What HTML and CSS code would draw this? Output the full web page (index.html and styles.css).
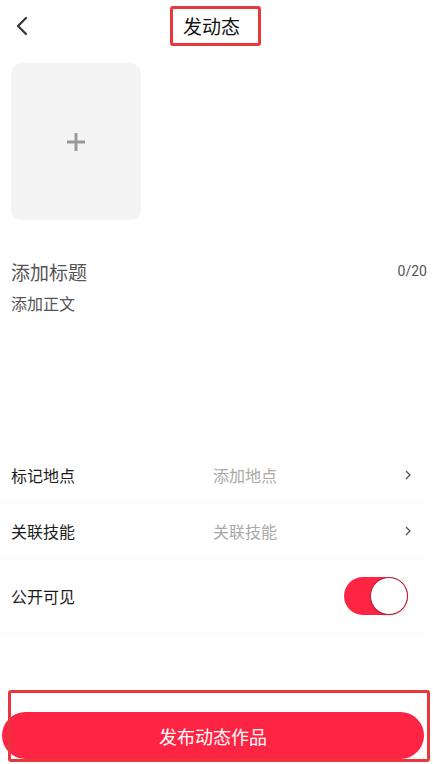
FILE: index.html
```html
<!DOCTYPE html>
<html lang="zh">
<head>
<meta charset="utf-8">
<link rel="stylesheet" href="styles.css">
</head>
<body>
<div class="page">
  <header class="nav">
    <button class="back" aria-label="返回">
      <svg width="14" height="20" viewBox="0 0 14 20"><path d="M11 2 L3 10 L11 18" fill="none" stroke="#333" stroke-width="2.2" stroke-linecap="round" stroke-linejoin="round"/></svg>
    </button>
    <h1 class="title">发动态<span class="mark mark-title"></span></h1>
  </header>

  <div class="photo">
    <svg width="20" height="20" viewBox="0 0 20 20"><path d="M10 1 V19 M1 10 H19" stroke="#9a9a9a" stroke-width="3"/></svg>
  </div>

  <div class="title-row">
    <span class="title-input">添加标题</span>
    <span class="count">0/20</span>
  </div>
  <div class="body-input">添加正文</div>

  <div class="list">
    <div class="row">
      <span class="label">标记地点</span>
      <span class="value">添加地点</span>
      <svg class="chev" width="6" height="10" viewBox="0 0 6 10"><path d="M1 1 L5 5 L1 9" fill="none" stroke="#444" stroke-width="1.1"/></svg>
    </div>
    <div class="row">
      <span class="label">关联技能</span>
      <span class="value">关联技能</span>
      <svg class="chev" width="6" height="10" viewBox="0 0 6 10"><path d="M1 1 L5 5 L1 9" fill="none" stroke="#444" stroke-width="1.1"/></svg>
    </div>
    <div class="row row-tall">
      <span class="label">公开可见</span>
      <span class="toggle"><span class="knob"></span></span>
    </div>
  </div>

  <div class="footer">
    <button class="publish">发布动态作品</button>
    <span class="mark mark-btn"></span>
  </div>
</div>
</body>
</html>
```

FILE: styles.css
```css
* { box-sizing: border-box; }
html, body { margin: 0; padding: 0; background: #fff; }
body {
  font-family: "Noto Sans CJK SC", "Noto Sans", sans-serif;
  color: #222;
}
.page {
  width: 433px;
  height: 764px;
  position: relative;
  display: flex;
  flex-direction: column;
}
.nav {
  height: 52px;
  display: flex;
  align-items: center;
  justify-content: center;
  position: relative;
}
.back {
  position: absolute;
  left: 15px;
  top: 15px;
  border: 0;
  background: none;
  padding: 0;
  width: 16px;
  height: 22px;
  display: flex;
  align-items: center;
}
.title {
  margin: 0 10px 0 0;
  font-size: 19px;
  font-weight: 400;
  line-height: 26px;
  color: #111;
  position: relative;
}
.mark {
  position: absolute;
  border: 3px solid #e8383d;
  border-radius: 3px;
  pointer-events: none;
}
.mark-title {
  left: -13px;
  right: -21px;
  top: -7px;
  bottom: -7px;
}
.photo {
  margin: 11px 0 0 11px;
  width: 130px;
  height: 157px;
  background: #f4f4f4;
  border-radius: 10px;
  display: flex;
  align-items: center;
  justify-content: center;
}
.title-row {
  margin-top: 39px;
  padding: 0 6px 0 11px;
  display: flex;
  align-items: center;
  justify-content: space-between;
  height: 24px;
}
.title-input {
  font-size: 19px;
  color: #555;
}
.count {
  font-family: "Roboto", "Noto Sans", sans-serif;
  font-size: 14px;
  color: #555;
}
.body-input {
  margin-top: 9px;
  padding-left: 11px;
  font-size: 16px;
  line-height: 22px;
  color: #555;
}
.list {
  margin-top: 133px;
  padding-right: 6px;
}
.row {
  height: 56px;
  display: flex;
  align-items: center;
  padding-left: 11px;
  border-bottom: 1px solid #f8f8f8;
  font-size: 16px;
}
.row-tall { height: 75px; justify-content: space-between; }
.label {
  width: 202px;
  color: #1c1c1c;
}
.value {
  flex: 1;
  color: #a9a9a9;
}
.chev { margin-right: 16px; }
.toggle {
  width: 64px;
  height: 38px;
  border-radius: 19px;
  background: #fe2443;
  margin-right: 19px;
  display: flex;
  justify-content: flex-end;
  align-items: center;
}
.knob {
  width: 38px;
  height: 38px;
  border-radius: 50%;
  background: #fff;
  border: 1px solid #b51f37;
  box-shadow: 0 1px 2px rgba(0,0,0,0.15);
}
.footer {
  margin-top: auto;
  height: 74px;
  position: relative;
  padding: 22px 0 0 2px;
}
.publish {
  width: 422px;
  height: 47px;
  border: 0;
  border-radius: 24px;
  background: #fe2443;
  color: #fff;
  font-family: "Noto Sans CJK SC", "Noto Sans", sans-serif;
  font-size: 18px;
  display: flex;
  align-items: center;
  justify-content: center;
  padding: 0;
}
.mark-btn {
  left: 8px;
  right: 3px;
  top: 0;
  bottom: 2px;
}
```
